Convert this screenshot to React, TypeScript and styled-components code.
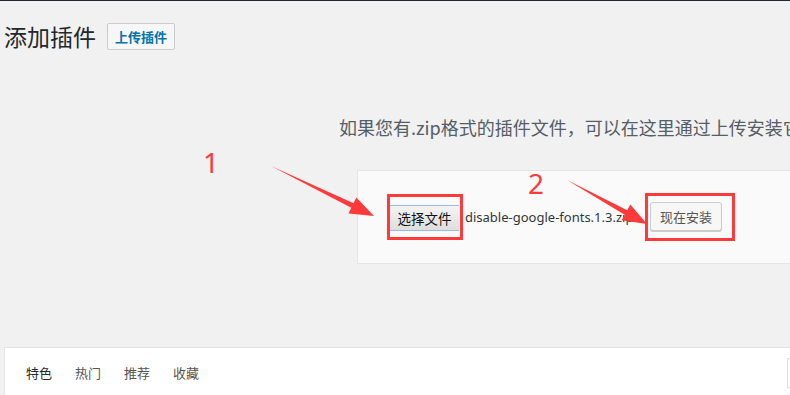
import styled, { createGlobalStyle } from 'styled-components';

const GlobalStyle = createGlobalStyle`
	html, body {
		margin: 0;
		padding: 0;
		background: #f1f1f1;
		overflow: hidden;
	}
	body {
		font-family: "Noto Sans", "Noto Sans CJK SC", sans-serif;
		color: #23282d;
	}
`

type Pt = [number, number]

// arrow outline: thin tail widening into a head at the tip
const arrowPoints = (tail: Pt, tip: Pt, headLen: number, shaft: number, head: number) => {
	const dx = tip[0] - tail[0]
	const dy = tip[1] - tail[1]
	const len = Math.hypot(dx, dy)
	const ux = dx / len
	const uy = dy / len
	const nx = -uy
	const ny = ux
	const hx = tip[0] - ux * headLen
	const hy = tip[1] - uy * headLen
	const pts: Pt[] = [
		tail,
		[hx + nx * shaft, hy + ny * shaft],
		[hx + nx * head, hy + ny * head],
		tip,
		[hx - nx * head, hy - ny * head],
		[hx - nx * shaft, hy - ny * shaft],
	]
	return pts.map(p => p.join(',')).join(' ')
}

const App = () => {
	return (
		<Page>
			<GlobalStyle />
			<AdminBar />
			<Wrap>
				<Header>
					<Title>添加插件</Title>
					<UploadToggle>上传插件</UploadToggle>
				</Header>
				<Help>如果您有.zip格式的插件文件，可以在这里通过上传安装它。</Help>
				<UploadForm>
					<FileButton>选择文件</FileButton>
					<FileName>disable-google-fonts.1.3.zip</FileName>
					<InstallButton>现在安装</InstallButton>
				</UploadForm>
				<FilterBar>
					<FilterLinks>
						<FilterLink $current>特色</FilterLink>
						<FilterLink>热门</FilterLink>
						<FilterLink>推荐</FilterLink>
						<FilterLink>收藏</FilterLink>
					</FilterLinks>
					<SearchBox />
				</FilterBar>
			</Wrap>

			<Marker $x={387} $y={194} $w={76} $h={46} />
			<Marker $x={645} $y={193} $w={90} $h={48} />
			<StepNumber $x={203} $y={143}>1</StepNumber>
			<StepNumber $x={528} $y={164}>2</StepNumber>
			<Arrows width="790" height="395" viewBox="0 0 790 395">
				<polygon points={arrowPoints([271, 166], [374, 216], 24, 2.6, 9)} fill="#ff3a3a" />
				<polygon points={arrowPoints([567, 180], [647, 224], 24, 2.6, 9)} fill="#ff3a3a" />
			</Arrows>
		</Page>
	)
}

const Page = styled.div`
	position: relative;
	width: 790px;
	height: 395px;
	overflow: hidden;
`

const AdminBar = styled.div`
	height: 1px;
	background: #23282d;
`

const Wrap = styled.div`
	padding-left: 4px;
`

const Header = styled.div`
	display: flex;
	align-items: center;
	gap: 11px;
	margin-top: 21px;
	height: 28px;
`

const Title = styled.h1`
	margin: 0;
	font-size: 23px;
	font-weight: 400;
	line-height: 28px;
	color: #23282d;
	font-family: "Noto Sans CJK SC", sans-serif;
`

const UploadToggle = styled.button`
	height: 27px;
	padding: 0 7px;
	border: 1px solid #ccc;
	border-radius: 2px;
	background: #f7f7f7;
	color: #0073aa;
	font-family: "Noto Sans CJK SC", sans-serif;
	font-size: 13px;
	font-weight: 700;
	line-height: 25px;
`

const Help = styled.p`
	margin: 65px 0 0 335px;
	font-size: 18px;
	line-height: 24px;
	color: #555d66;
	white-space: nowrap;
	font-family: "Noto Sans CJK SC", sans-serif;
`

const UploadForm = styled.div`
	display: flex;
	align-items: center;
	width: 500px;
	height: 92px;
	margin: 31px 0 0 353px;
	padding-left: 32px;
	background: #fafafa;
	border: 1px solid #e5e5e5;
`

const FileButton = styled.button`
	width: 69px;
	height: 26px;
	padding: 0;
	border: none;
	border-top: 1px solid #9dbbe9;
	border-bottom: 1px solid #9dbbe9;
	background: linear-gradient(#f4f4f4, #dedede);
	color: #111;
	font-family: "Noto Sans CJK SC", sans-serif;
	font-size: 13.5px;
	line-height: 24px;
	margin-top: 1px;
`

const FileName = styled.span`
	width: 185px;
	margin-left: 6px;
	font-size: 13px;
	color: #32373c;
	white-space: nowrap;
`

const InstallButton = styled.button`
	height: 29px;
	padding: 0 9px;
	border: 1px solid #ccc;
	border-radius: 3px;
	background: #f7f7f7;
	box-shadow: 0 1px 0 #ccc;
	color: #555;
	font-family: "Noto Sans CJK SC", sans-serif;
	font-size: 13px;
	line-height: 27px;
	margin-bottom: 2px;
`

const FilterBar = styled.div`
	display: flex;
	align-items: flex-start;
	margin-top: 83px;
	height: 60px;
	background: #fff;
	border-top: 1px solid #e2e2e2;
	border-left: 1px solid #e5e5e5;
`

const FilterLinks = styled.div`
	display: flex;
	flex-shrink: 0;
	gap: 23px;
	width: 761px;
	padding: 16px 0 0 21px;
`

const FilterLink = styled.span<{ $current?: boolean }>`
	font-family: "Noto Sans CJK SC", sans-serif;
	font-size: 13px;
	line-height: 18px;
	color: ${p => (p.$current ? '#23282d' : '#555')};
`

const SearchBox = styled.div`
	width: 180px;
	height: 30px;
	margin-top: 10px;
	border: 1px solid #ddd;
	box-sizing: border-box;
	flex-shrink: 0;
`

const Marker = styled.div<{ $x: number; $y: number; $w: number; $h: number }>`
	position: absolute;
	left: ${p => p.$x}px;
	top: ${p => p.$y}px;
	width: ${p => p.$w}px;
	height: ${p => p.$h}px;
	box-sizing: border-box;
	border: 3px solid #ff3a3a;
`

const StepNumber = styled.span<{ $x: number; $y: number }>`
	position: absolute;
	left: ${p => p.$x}px;
	top: ${p => p.$y}px;
	font-family: "Noto Sans", sans-serif;
	font-size: 28px;
	line-height: 38px;
	color: #ff3a3a;
`

const Arrows = styled.svg`
	position: absolute;
	left: 0;
	top: 0;
	pointer-events: none;
`

export default App
